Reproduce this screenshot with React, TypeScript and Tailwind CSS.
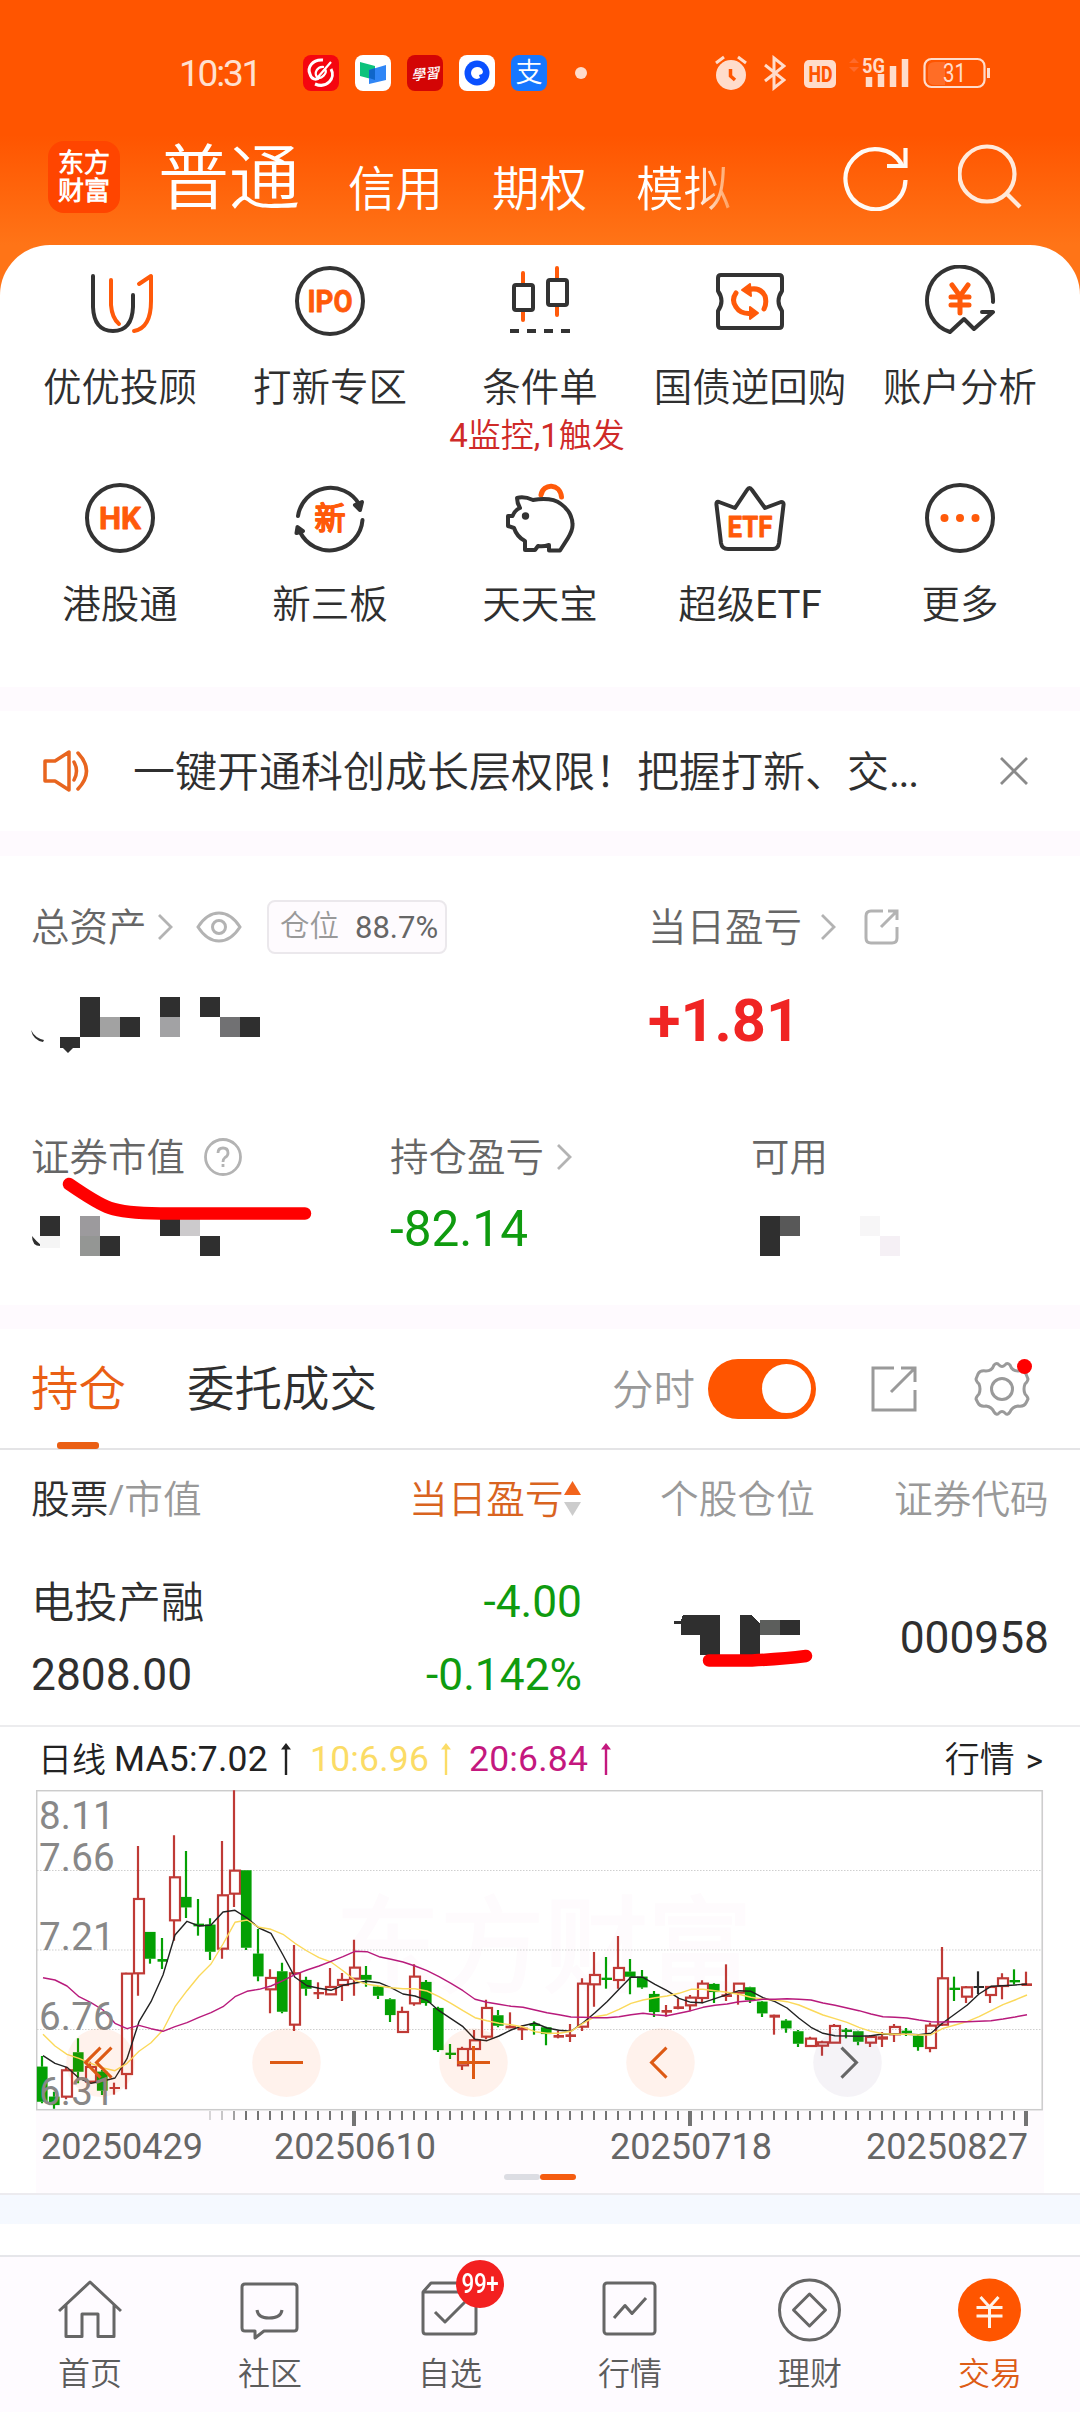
import React from "react";

type IconProps = { children: React.ReactNode };

const INK = "#333333";
const ORANGE = "#ff5a0a";

/* ---------- Status bar ---------- */

function StatusBar() {
  return (
    <div className="flex h-[36px] items-center">
      <span className="w-[124px] text-[37px] leading-none tracking-[-2.200px] text-[#ffe0cf]">10:31</span>
      <div className="flex gap-[16px]">
        <svg width="36" height="36" viewBox="0 0 36 36">
          <rect width="36" height="36" rx="8" fill="#f5060f" />
          <path d="M20 5 C9 4 4 13 7 19 C8 24 13 26 17 22 M12 29 C24 34 33 23 28 14" fill="none" stroke="#fff" strokeWidth="3" />
          <path d="M28 7 L15 22 M21 12 C14 11 11 18 14 22 C18 25 25 18 22 14" fill="none" stroke="#fff" strokeWidth="2.200" />
        </svg>
        <svg width="36" height="36" viewBox="0 0 36 36">
          <rect width="36" height="36" rx="8" fill="#fff" />
          <path d="M5 7 L20 11 V25 L5 21 Z" fill="#0cc27c" />
          <path d="M14 15 L31 10 V25 L14 29 Z" fill="#2f86f6" />
          <path d="M14 15 L20 13 V25 L14 23 Z" fill="#0f66c9" />
        </svg>
        <div className="flex h-[36px] w-[36px] items-center justify-center rounded-[8px] bg-[#d30505]">
          <span className="-rotate-6 font-['Noto_Sans_CJK_TC',sans-serif] text-[14px] leading-none font-medium text-white italic">學習</span>
        </div>
        <svg width="36" height="36" viewBox="0 0 36 36">
          <rect width="36" height="36" rx="8" fill="#fff" />
          <circle cx="18" cy="18" r="12.500" fill="#0a50ff" />
          <path d="M18 12 A6 6 0 1 0 18 24 L21 23 L20 20 L23 19 L24 17 A6 6 0 0 0 18 12 Z" fill="#fff" />
        </svg>
        <div className="flex h-[36px] w-[36px] items-center justify-center rounded-[8px] bg-[#1677ff]">
          <span className="text-[27px] leading-none font-medium text-white">支</span>
        </div>
      </div>
      <div className="ml-[28px] h-[12px] w-[12px] rounded-full bg-[#ffdccb]" />
      <div className="ml-[128px] flex items-center">
        <svg width="32" height="36" viewBox="0 0 32 36">
          <circle cx="16" cy="20" r="15" fill="#ffdccb" />
          <path d="M1 8 L9 2 M31 8 L23 2" stroke="#ffdccb" strokeWidth="3" />
          <path d="M15.500 14 V21 L20 25" fill="none" stroke="#ff5500" strokeWidth="3.500" />
        </svg>
        <svg className="ml-[17px]" width="22" height="36" viewBox="0 0 22 36">
          <path d="M1 10 L20 25 L10 33 V3 L20 11 L1 26" fill="none" stroke="#ffdccb" strokeWidth="3" />
        </svg>
        <svg className="ml-[18px]" width="32" height="36" viewBox="0 0 32 36">
          <rect y="5" width="32" height="28" rx="5" fill="#ffdccb" />
          <text x="4.500" y="27" fontSize="22" fontWeight="800" textLength="24" lengthAdjust="spacingAndGlyphs" fill="#ff5500">HD</text>
        </svg>
        <svg className="ml-[11px]" width="64" height="36" viewBox="0 0 64 36">
          <path d="M2 8 L7 3 L12 8 Z M2 12 L7 17 L12 12 Z" fill="#ff6a2a" />
          <text x="15" y="17.500" fontSize="20" fontWeight="700" textLength="23" lengthAdjust="spacingAndGlyphs" fill="#ffdccb">5G</text>
          <path d="M22 22 V32 M34 19 V32 M46 11 V32 M58 4 V32" stroke="#ffdccb" strokeWidth="6.500" strokeLinecap="butt" />
        </svg>
        <svg className="ml-[12px]" width="68" height="36" viewBox="0 0 68 36">
          <rect x="1.500" y="4" width="60" height="28" rx="7" fill="none" stroke="#ffdccb" strokeWidth="2.200" />
          <path d="M12 7 H22 V30 H12 Q5 30 5 24 V13 Q5 7 12 7" fill="#ff6d26" />
          <path d="M65.500 13 V23" stroke="#ffdccb" strokeWidth="3" />
          <text x="20" y="27" fontSize="25" textLength="23" lengthAdjust="spacingAndGlyphs" fill="#ffdccb">31</text>
        </svg>
      </div>
    </div>
  );
}

/* ---------- Header ---------- */

function Header() {
  return (
    <header className="h-[295px] bg-[linear-gradient(180deg,#ff5500_0px,#ff5500_135px,#ff7417_245px,#ff7417_295px)]">
      <div className="pt-[55px] pl-[179px]">
        <StatusBar />
      </div>
      <div className="mt-[46px] flex h-[80px] items-start pl-[48px] text-white">
        <div className="mt-[4px] flex h-[72px] w-[72px] flex-col items-center justify-center rounded-[16px] bg-[#ff4500] text-[26px] leading-[28px] font-bold">
          <span>东方</span>
          <span>财富</span>
        </div>
        <span className="mt-[2px] ml-[38px] w-[190px] text-[71px] leading-[80px]">普通</span>
        <span className="mt-[13px] w-[144px] text-[47.500px] leading-[80px]">信用</span>
        <span className="mt-[13px] w-[144px] text-[47.500px] leading-[80px]">期权</span>
        <span className="mt-[13px] w-[98px] bg-[linear-gradient(90deg,#ffffff_60%,#ff9a55_98%)] bg-clip-text text-[47.500px] leading-[80px] text-transparent">
          模拟
        </span>
        <svg className="mt-[6px] ml-[108px]" width="68" height="68" viewBox="0 0 68 68" fill="none" stroke="#fffaf5" strokeWidth="4.200">
          <path d="M63.500 37 A30 30 0 1 1 60 22" />
          <path d="M63.500 5 V23 H45" />
        </svg>
        <svg className="mt-[7px] ml-[48px]" width="66" height="66" viewBox="0 0 66 66" fill="none" stroke="#ffeadb" strokeWidth="4.200">
          <circle cx="29" cy="30" r="27.500" />
          <path d="M48 49 L62 63" />
        </svg>
      </div>
    </header>
  );
}

/* ---------- Service grid ---------- */

function ServiceIcon({ children }: IconProps) {
  return (
    <svg width="72" height="72" viewBox="0 0 72 72" fill="none" stroke={INK} strokeWidth="4" strokeLinecap="round" strokeLinejoin="round">
      {children}
    </svg>
  );
}

function IconLabel({ y, size, width, children }: { y: number; size: number; width: number; children: string }) {
  return (
    <text
      x="36"
      y={y}
      textAnchor="middle"
      fontSize={size}
      fontWeight="700"
      textLength={width}
      lengthAdjust="spacingAndGlyphs"
      fill={ORANGE}
      stroke={ORANGE}
      strokeWidth="0.800"
    >
      {children}
    </text>
  );
}

const services: { label: string; note?: string; icon: React.ReactNode }[] = [
  {
    label: "优优投顾",
    icon: (
      <ServiceIcon>
        <path d="M9 11 V42 Q10 66 29 66 Q48 66 49 42 V30" />
        <path d="M27 15 V40 Q28 53 35 59 M55 19 L67 11 V36 Q67 63 50 66" stroke={ORANGE} />
      </ServiceIcon>
    ),
  },
  {
    label: "打新专区",
    icon: (
      <ServiceIcon>
        <circle cx="36" cy="36" r="33" />
        <IconLabel y={47} size={31} width={45}>IPO</IconLabel>
      </ServiceIcon>
    ),
  },
  {
    label: "条件单",
    note: "4监控,1触发",
    icon: (
      <ServiceIcon>
        <path d="M19 8 V19 M19 45 V55 M53 3 V14 M53 40 V50" stroke={ORANGE} />
        <rect x="10" y="20" width="19" height="25" rx="2" />
        <rect x="44" y="15" width="19" height="25" rx="2" />
        <path d="M6 66 H15 M23 66 H32 M40 66 H49 M57 66 H66" strokeLinecap="butt" />
      </ServiceIcon>
    ),
  },
  {
    label: "国债逆回购",
    icon: (
      <ServiceIcon>
        <path d="M7 10 H65 Q68 10 68 13 V26 Q61 36 68 46 V60 Q68 63 65 63 H7 Q4 63 4 60 V46 Q11 36 4 26 V13 Q4 10 7 10 Z" />
        <path d="M33 25 Q46 21 51 31 Q53 38 50 44 M22 28 Q17 35 22 42 Q27 50 39 48" stroke={ORANGE} strokeWidth="5" />
        <path d="M36 19 L28 25 L37 31 Z M36 42 L44 48 L36 54 Z" fill={ORANGE} stroke={ORANGE} strokeWidth="2" />
      </ServiceIcon>
    ),
  },
  {
    label: "账户分析",
    icon: (
      <ServiceIcon>
        <path d="M69 37 A33 33.500 0 1 0 26 67 L40 54 L50 64 L69 47 H58" />
        <path d="M28 20 L36 31 L44 20 M27 32 H45 M27 40 H45 M36 31 V48" stroke={ORANGE} strokeWidth="5" />
      </ServiceIcon>
    ),
  },
  {
    label: "港股通",
    icon: (
      <ServiceIcon>
        <circle cx="36" cy="36" r="33" />
        <IconLabel y={47} size={31} width={42}>HK</IconLabel>
      </ServiceIcon>
    ),
  },
  {
    label: "新三板",
    icon: (
      <ServiceIcon>
        <path d="M4 34 A33 33 0 0 1 65 22 M68.500 38 A33 33 0 0 1 6 50" />
        <path d="M66 28 L61 23 L68 20 Z M3.500 45 L2.500 51 L9 49 Z" fill={INK} />
        <IconLabel y={47} size={31} width={31}>新</IconLabel>
      </ServiceIcon>
    ),
  },
  {
    label: "天天宝",
    icon: (
      <ServiceIcon>
        <path d="M37 13 C39 1 56 1 57.500 15" stroke={ORANGE} strokeWidth="5" />
        <path d="M4 34 H8.500 Q11 28 16 26 Q13 21 13 16 Q20 14 29 18 Q48 15 57 22 Q68 30 68.500 42 Q69 48 64 56 L56 68.500 H45 V63 Q39 65 34 64 L31 68 H21 V59 Q13 55 10 46 L4 44 Z" />
        <circle cx="21.500" cy="34" r="3.700" fill={INK} stroke="none" />
      </ServiceIcon>
    ),
  },
  {
    label: "超级ETF",
    icon: (
      <ServiceIcon>
        <path d="M5 20 L21 26 L33 8 Q35.500 4 38 8 L51 26 L67 20 Q70 20 69.500 23 L65 61 Q64 67 59 67 H14 Q8 67 7 61 L2.500 23 Q2 19 5 20 Z" />
        <IconLabel y={55} size={30} width={45}>ETF</IconLabel>
      </ServiceIcon>
    ),
  },
  {
    label: "更多",
    icon: (
      <ServiceIcon>
        <circle cx="36" cy="36" r="33" />
        <g fill={ORANGE} stroke="none">
          <circle cx="20.500" cy="36" r="4" />
          <circle cx="36" cy="36" r="4" />
          <circle cx="51.500" cy="36" r="4" />
        </g>
      </ServiceIcon>
    ),
  },
];

function Services() {
  return (
    <section className="-mt-[50px] grid h-[442px] grid-cols-5 content-start rounded-t-[50px] bg-white px-[15px] pt-[20px]">
      {services.map((s) => (
        <div key={s.label} className="flex h-[217px] flex-col items-center">
          {s.icon}
          <span className="mt-[26px] text-[38.500px] leading-[50px] whitespace-nowrap text-[#2f2f2f]">{s.label}</span>
          {s.note && <span className="mr-[6px] text-[33px] leading-[46px] whitespace-nowrap text-[#cf2a28]">{s.note}</span>}
        </div>
      ))}
    </section>
  );
}

/* ---------- Notice ---------- */

function Notice() {
  return (
    <section className="flex h-[120px] items-center bg-white pl-[42px]">
      <svg width="50" height="44" viewBox="0 0 50 44" fill="none" stroke="#e8651f" strokeWidth="3.500" strokeLinejoin="round">
        <path d="M3 12 H13 L27 3 V41 L13 32 H3 Z" />
        <path d="M32 13 Q37 22 32 31 M36 4 Q53 22 36 40" strokeLinecap="round" />
      </svg>
      <span className="mt-[3px] ml-[41px] w-[867px] text-[42px] leading-none whitespace-nowrap text-[#2f2f2f]">
        一键开通科创成长层权限！把握打新、交<span className="tracking-[-1.500px]">...</span>
      </span>
      <svg width="28" height="28" viewBox="0 0 28 28" stroke="#8a8a8a" strokeWidth="2.800">
        <path d="M1 1 L27 27 M27 1 L1 27" />
      </svg>
    </section>
  );
}

/* ---------- Assets ---------- */

function Chevron({ className }: { className?: string }) {
  return (
    <svg className={className} width="16" height="28" viewBox="0 0 16 28" fill="none" stroke="#b3b3b3" strokeWidth="2.800">
      <path d="M2 2 L14 14 L2 26" />
    </svg>
  );
}

type Block = [x: number, y: number, w: number, h: number, color: string];

function Mosaic({ className, width, height, blocks, mark }: { className?: string; width: number; height: number; blocks: Block[]; mark?: string }) {
  return (
    <svg className={className} width={width} height={height} viewBox={`0 0 ${width} ${height}`} overflow="visible" shapeRendering="crispEdges">
      {mark && <path d={mark} fill="#2f2f2f" shapeRendering="geometricPrecision" />}
      {blocks.map(([x, y, w, h, c], i) => (
        <rect key={i} x={x} y={y} width={w} height={h} fill={c} />
      ))}
    </svg>
  );
}

const D = "#2f2f2f";

function Assets() {
  return (
    <section className="relative h-[449px] bg-white pt-[44px] text-[38.500px] leading-none text-[#666666]">
      <div className="flex h-[54px] items-center pl-[31px]">
        <span className="mt-[3px] w-[126px]">总资产</span>
        <Chevron />
        <svg className="ml-[23px]" width="46" height="34" viewBox="0 0 46 34" fill="none" stroke="#b3b3b3" strokeWidth="3">
          <path d="M2 17 Q11 3 23 3 Q35 3 44 17 Q35 31 23 31 Q11 31 2 17 Z" />
          <circle cx="23" cy="17" r="6.500" />
        </svg>
        <div className="ml-[25px] flex h-[54px] w-[180px] items-center rounded-[8px] border-2 border-[#ebe8ec] bg-[#fefbfe] pl-[11px]">
          <span className="text-[29.500px] text-[#999999]">仓位</span>
          <span className="ml-[16px] text-[31px] text-[#666666]">88.7%</span>
        </div>
        <span className="mt-[3px] ml-[201px] w-[172px]">当日盈亏</span>
        <Chevron />
        <svg className="ml-[28px]" width="36" height="36" viewBox="0 0 36 36" fill="none" stroke="#b3b3b3" strokeWidth="3">
          <path d="M19 2 H7 Q2 2 2 7 V29 Q2 34 7 34 H28 Q33 34 33 29 V18 M24 2 H33 V11 M33 2 L17 18" />
        </svg>
      </div>
      <div className="mt-[43px] flex h-[60px] items-start pl-[20px]">
        <Mosaic
          width={240}
          height={60}
          mark="M11 33 Q15 41 24 43 L23 45 Q13 43 11 33 Z M42 50 L48 56 L56 48 Z"
          blocks={[
            [60, 0, 20, 40, D], [80, 20, 20, 20, "#a2a2a2"], [100, 20, 20, 20, D],
            [140, 0, 20, 20, D], [140, 20, 20, 20, "#a2a2a4"], [180, 0, 20, 20, D],
            [200, 20, 20, 20, "#717173"], [220, 20, 20, 20, D], [40, 40, 20, 11, D],
          ]}
        />
        <span className="-mt-[5px] ml-[388px] text-[59.500px] font-bold text-[#f02524]">+1.81</span>
      </div>
      <div className="mt-[70px] flex h-[60px] items-center pl-[31px]">
        <span className="mt-[2px] w-[173px]">证券市值</span>
        <svg width="38" height="38" viewBox="0 0 38 38" fill="none" stroke="#b3b3b3" strokeWidth="2.800">
          <circle cx="19" cy="19" r="17.500" />
          <path d="M14 15 Q14 10 19 10 Q24 10 24 15 Q24 18 21 19.500 Q19 21 19 24 M19 26 V29" />
        </svg>
        <span className="mt-[2px] ml-[148px] w-[166px]">持仓盈亏</span>
        <Chevron />
        <span className="mt-[2px] ml-[179px]">可用</span>
      </div>
      <div className="mt-[22px] flex items-start pl-[20px]">
        <Mosaic
          className="mt-[7px]"
          width={220}
          height={40}
          mark="M12 20 Q16 25 22 30 Q12 31 12 20 Z"
          blocks={[
            [20, 0, 20, 20, D], [20, 20, 20, 12, "#f5f5f5"], [60, 0, 20, 20, "#9c9a9d"], [60, 20, 20, 20, "#949694"],
            [80, 20, 20, 20, D], [140, 0, 20, 20, D], [160, 0, 20, 20, "#cccacc"], [180, 20, 20, 20, D],
          ]}
        />
        <span className="-mt-[4px] ml-[150px] w-[370px] text-[49.500px] text-[#0f9b0f]">-82.14</span>
        <Mosaic
          className="mt-[7px]"
          width={160}
          height={40}
          blocks={[[0, 0, 20, 40, D], [20, 0, 20, 20, "#585858"], [100, 0, 20, 20, "#f7f6f7"], [120, 20, 20, 20, "#f5f0f5"]]}
        />
      </div>
      <svg className="absolute top-[320px] left-[56px]" width="264" height="48" viewBox="0 0 264 48" fill="none" stroke="#ff0000" strokeWidth="12.500" strokeLinecap="round" strokeLinejoin="round">
        <path d="M13 8 Q42 28 54 32 Q68 37 104 37.500 H249" />
      </svg>
    </section>
  );
}

/* ---------- Holdings ---------- */

function HoldingsTabs() {
  return (
    <div className="flex h-[121px] items-center border-b-2 border-[#e4e4e6] pl-[31px] text-[47.500px] leading-none">
      <div className="relative flex h-full w-[156px] items-center text-[#ea5f14]">
        <span className="mt-[5px]">持仓</span>
        <div className="absolute bottom-[-1px] left-[26px] h-[7px] w-[42px] rounded-[3px] bg-[#ea5f14]" />
      </div>
      <span className="mt-[5px] w-[425px] text-[#2f2f2f]">委托成交</span>
      <span className="mt-[4px] w-[96px] text-[41.500px] text-[#999999]">分时</span>
      <div className="flex h-[60px] w-[108px] items-center justify-end rounded-full bg-[#ff5500] pr-[5px]">
        <div className="h-[49px] w-[49px] rounded-full bg-white" />
      </div>
      <svg className="ml-[55px]" width="46" height="46" viewBox="0 0 46 46" fill="none" stroke="#9a9a9a" strokeWidth="3">
        <path d="M23 2 H2 V44 H44 V24 M30 2 H44 V16 M44 2 L20 26" />
      </svg>
      <div className="relative ml-[55px] h-[58px] w-[60px]">
        <svg width="60" height="58" viewBox="0 0 60 58" fill="none" stroke="#9a9a9a" strokeWidth="3" strokeLinejoin="round">
          <path d="M22 5 Q25 2 27 5 Q30 8 33 5 Q35 2 38 5 Q40 11 46 11 Q52 10 54 14 L56 19 Q56 21 53 24 Q51 29 53 34 Q56 37 56 39 L54 43 Q52 47 46 46 Q40 47 38 52 Q35 56 33 53 Q30 50 27 53 Q25 56 22 52 Q20 47 14 46 Q8 47 6 43 L4 39 Q4 37 7 34 Q9 29 7 24 Q4 21 4 19 L6 14 Q8 10 14 11 Q20 11 22 5 Z" />
          <circle cx="30" cy="29" r="10.500" />
        </svg>
        <div className="absolute top-[-1px] right-0 h-[15px] w-[15px] rounded-full bg-[#ff0000]" />
      </div>
    </div>
  );
}

function HoldingsTable() {
  return (
    <div className="border-b-2 border-[#ececee] leading-none">
      <div className="flex h-[98px] items-center pl-[31px] text-[38.700px] whitespace-nowrap text-[#999999]">
        <span className="mt-[2px] w-[378px]">
          <span className="text-[#2f2f2f]">股票</span>/市值
        </span>
        <span className="mt-[2px] w-[155px] text-[#d9641f]">当日盈亏</span>
        <svg className="w-[17px]" width="17" height="36" viewBox="0 0 17 36">
          <path d="M8.500 0 L17 14 H0 Z" fill="#f2641c" />
          <path d="M8.500 35 L17 21 H0 Z" fill="#cccccc" />
        </svg>
        <span className="mt-[2px] ml-[79px] w-[234px]">个股仓位</span>
        <span className="mt-[2px]">证券代码</span>
      </div>
      <div className="flex h-[177px] pr-[31px] pl-[31px] text-[44.300px] text-[#2f2f2f]">
        <div className="flex w-[250px] flex-col pt-[32px]">
          <span className="text-[43.300px] leading-[48px]">电投产融</span>
          <span className="mt-[22px] leading-[50px]">2808.00</span>
        </div>
        <div className="flex w-[301px] flex-col items-end pt-[30px] text-[#0f9b0f]">
          <span className="leading-[48px]">-4.00</span>
          <span className="mt-[24px] leading-[50px]">-0.142%</span>
        </div>
        <svg className="mt-[66px] ml-[90px]" width="144" height="60" viewBox="0 0 144 60" shapeRendering="crispEdges">
          <path d="M2 7 H9 L11 1 H28 H48 V41 H28 V21 H9 V10 H2 Z M68 1 H80 L88 10 V41 H68 Z" fill={D} />
          <rect x="88" y="6" width="20" height="15" fill="#5c5e5c" />
          <rect x="108" y="6" width="20" height="15" fill={D} />
          <path d="M37 46.500 H80 Q110 45 134 42" fill="none" stroke="#ff0000" strokeWidth="12.500" strokeLinecap="round" shapeRendering="geometricPrecision" />
        </svg>
        <span className="mt-[66px] ml-auto leading-[48px]">000958</span>
      </div>
    </div>
  );
}

/* ---------- Candlestick chart ---------- */

// kind: g falling, r rising, k unchanged; then high, body top, body bottom, low
type Candle = [kind: "g" | "r" | "k", high: number, top: number, bottom: number, low: number];

const candles: Candle[] = [
  ["g", 1008, 1040, 1145, 1150], ["g", 1115, 1130, 1155, 1166], ["r", 1040, 1050, 1130, 1138], ["g", 955, 997, 1055, 1090],
  ["r", 1025, 1040, 1085, 1090], ["g", 1050, 1055, 1112, 1125], ["r", 1088, 1104, 1104, 1124], ["r", 758, 760, 1062, 1108],
  ["r", 378, 536, 760, 827], ["g", 636, 636, 716, 731], ["g", 654, 718, 724, 747], ["r", 346, 471, 601, 662],
  ["g", 393, 531, 562, 594], ["g", 537, 612, 618, 647], ["g", 595, 614, 695, 720], ["r", 363, 525, 686, 716],
  ["r", 211, 451, 521, 561], ["g", 451, 451, 683, 690], ["g", 627, 701, 769, 784], ["r", 748, 773, 808, 880],
  ["g", 728, 754, 875, 880], ["r", 675, 759, 914, 933], ["g", 770, 780, 806, 827], ["r", 787, 817, 822, 837],
  ["r", 744, 800, 823, 823], ["r", 759, 779, 795, 843], ["r", 659, 742, 776, 827], ["g", 738, 765, 779, 800],
  ["g", 798, 800, 827, 837], ["g", 835, 838, 885, 906], ["r", 860, 875, 936, 936], ["r", 733, 769, 850, 857],
  ["g", 780, 786, 849, 857], ["g", 860, 864, 990, 996], ["g", 972, 999, 1004, 1017], ["r", 980, 986, 1036, 1050],
  ["r", 930, 960, 987, 990], ["r", 839, 863, 950, 958], ["g", 870, 886, 917, 922], ["r", 877, 918, 924, 924],
  ["r", 916, 924, 930, 960], ["g", 904, 912, 917, 944], ["g", 920, 922, 942, 976], ["r", 932, 946, 952, 955],
  ["r", 912, 944, 950, 966], ["r", 775, 790, 920, 933], ["r", 696, 764, 793, 860], ["g", 711, 774, 779, 806],
  ["r", 648, 743, 780, 806], ["g", 717, 755, 770, 823], ["g", 750, 770, 802, 806], ["g", 813, 822, 876, 891],
  ["r", 855, 871, 877, 890], ["r", 835, 860, 866, 868], ["r", 825, 832, 856, 872], ["r", 781, 790, 834, 850],
  ["g", 790, 792, 816, 849], ["r", 733, 824, 830, 843], ["r", 790, 790, 818, 854], ["g", 800, 802, 840, 849],
  ["g", 843, 845, 880, 891], ["r", 884, 885, 892, 944], ["g", 898, 902, 925, 938], ["g", 930, 934, 971, 981],
  ["r", 950, 955, 978, 980], ["r", 962, 966, 977, 1007], ["r", 912, 917, 968, 968], ["g", 924, 930, 935, 955],
  ["g", 932, 934, 965, 976], ["r", 945, 950, 968, 981], ["r", 936, 950, 958, 981], ["r", 912, 920, 943, 966],
  ["g", 924, 933, 938, 948], ["g", 942, 948, 981, 992], ["r", 908, 916, 984, 997], ["r", 681, 774, 914, 918],
  ["g", 770, 804, 809, 843], ["r", 798, 801, 830, 849], ["k", 754, 801, 801, 822], ["r", 798, 800, 825, 849],
  ["r", 760, 774, 798, 838], ["g", 748, 781, 786, 794], ["r", 755, 791, 797, 798],
];

const ma5 = [
  1007, 1030, 1042, 1075, 1090, 1083, 1074, 1016, 905, 845, 765, 645, 604, 618, 615, 576, 571, 594, 624, 640, 705, 772, 797, 805, 811,
  796, 789, 784, 788, 803, 822, 828, 841, 872, 896, 920, 958, 962, 948, 930, 917, 909, 924, 931, 934, 908, 878, 845, 808, 771, 772, 793,
  812, 835, 847, 848, 836, 824, 812, 814, 833, 845, 864, 895, 922, 940, 947, 948, 949, 947, 942, 943, 943, 944, 940, 908, 882, 856, 822,
  799, 797, 795, 792,
];
const ma10 = [
  943, 978, 1003, 1015, 1030, 1044, 1052, 1030, 994, 968, 930, 860, 812, 768, 732, 672, 607, 600, 622, 628, 643, 670, 693, 713, 726, 752,
  781, 793, 798, 803, 806, 806, 813, 830, 850, 872, 893, 902, 910, 914, 921, 935, 940, 940, 934, 910, 890, 884, 868, 850, 840, 833, 828,
  820, 808, 808, 812, 817, 823, 832, 838, 840, 845, 855, 870, 885, 896, 907, 922, 934, 941, 943, 943, 945, 944, 925, 915, 905, 890, 872,
  854, 840, 825,
];
const ma20 = [
  773, 780, 798, 830, 848, 870, 910, 926, 916, 926, 934, 920, 908, 892, 878, 860, 830, 814, 808, 798, 782, 764, 750, 738, 724, 710, 694,
  695, 710, 718, 726, 738, 752, 770, 790, 812, 838, 847, 853, 859, 862, 870, 878, 884, 891, 892, 893, 893, 890, 884, 880, 884, 887, 880,
  872, 862, 856, 852, 845, 842, 838, 838, 836, 838, 840, 849, 856, 864, 872, 882, 890, 892, 894, 900, 905, 906, 905, 905, 904, 902, 897,
  891, 884,
];

const px = (i: number) => 6 + i * 12;
const py = (v: number) => v / 3 - 70;
const line = (vals: number[]) => vals.map((v, i) => `${px(i) + 1},${py(v).toFixed(1)}`).join(" ");
const candleColor = { g: "#04a004", r: "#bf3a36", k: "#2b2b2b" };

function CandleShape({ c, i }: { c: Candle; i: number }) {
  const [kind, high, top, bottom, low] = c;
  const x = px(i);
  const color = candleColor[kind];
  const flat = bottom - top < 10;
  return (
    <g stroke={color} strokeWidth="2.200" fill="none">
      {flat ? (
        <>
          <path d={`M${x} ${py(high)} V${py(low)}`} />
          <path d={`M${x - 4.5} ${py((top + bottom) / 2)} H${x + 6}`} strokeWidth={Math.max(2, (bottom - top) / 3 + 0.7)} />
        </>
      ) : (
        <>
          <path d={`M${x} ${py(high)} V${py(top)} M${x} ${py(bottom)} V${py(low)}`} />
          <rect
            x={x - 4}
            y={py(top) + (kind === "g" ? 1 : 0.3)}
            width={kind === "g" ? 8.5 : 10}
            height={(bottom - top) / 3 - (kind === "g" ? 2 : 0.3)}
            fill={kind === "g" ? color : "none"}
          />
        </>
      )}
    </g>
  );
}

function RoundButton({ x, muted, d }: { x: number; muted?: boolean; d: string }) {
  return (
    <g transform={`translate(${x} 272.600)`}>
      <circle r="34.300" fill={muted ? "#776090" : "#ff5500"} fillOpacity={0.075} />
      <path d={d} fill="none" stroke={muted ? "#666666" : "#dd5a14"} strokeWidth="3" />
    </g>
  );
}

function UpArrow({ className }: { className?: string }) {
  return (
    <svg className={className} width="12" height="32" viewBox="0 0 12 32">
      <path d="M6 0 L11 6.500 H7.200 V32 H4.800 V6.500 H1 Z" fill="currentColor" />
    </svg>
  );
}

const dates: [string, string][] = [
  ["20250429", "w-[233px]"],
  ["20250610", "w-[336px]"],
  ["20250718", "w-[256px]"],
  ["20250827", ""],
];

function ChartPanel() {
  return (
    <div className="border-b-2 border-[#ecebef]">
      <div className="flex h-[63px] items-center pr-[37px] pl-[38px] text-[35.500px] leading-none text-[#222222]">
        <span className="mt-[3px] text-[34px]">日线</span>
        <span className="mt-[2px] ml-[8px] w-[166px] tracking-[0.200px]">MA5:7.02</span>
        <UpArrow />
        <span className="mt-[2px] ml-[18px] w-[130px] tracking-[0.200px] text-[#fbdc66]">10:6.96</span>
        <UpArrow className="text-[#fbdc66]" />
        <span className="mt-[2px] ml-[17px] w-[131px] tracking-[0.200px] text-[#c4187e]">20:6.84</span>
        <UpArrow className="text-[#c4187e]" />
        <span className="mt-[3px] ml-auto text-[35px]">行情</span>
        <span className="mt-[3px] ml-[11px] text-[33px]">&gt;</span>
      </div>
      <div className="mx-[36px] h-[403px] bg-[#fefbfe]">
        <svg className="block" width="1007" height="340" viewBox="0 0 1007 340">
          <rect x="0.700" y="0.700" width="1005.500" height="319" fill="#ffffff" stroke="#cccccc" strokeWidth="1.500" />
          <text x="300" y="194" fontSize="104" fontWeight="900" fill="#fefbfd">东方财富</text>
          <path d="M1 80.500 H1005 M1 160 H1005 M1 239.500 H1005" stroke="#cfcfcf" strokeDasharray="1.500 1.500" />
          {candles.map((c, i) => (
            <CandleShape key={i} c={c} i={i} />
          ))}
          <g fill="none" strokeWidth="1.400" strokeLinejoin="round">
            <polyline points={line(ma5)} stroke="#222222" />
            <polyline points={line(ma10)} stroke="#fbd95a" />
            <polyline points={line(ma20)} stroke="#b81b7c" />
          </g>
          <g fontSize="38.500" fill="#888888" letterSpacing="0.200">
            <text x="3" y="39">8.11</text>
            <text x="3" y="81">7.66</text>
            <text x="3" y="160">7.21</text>
            <text x="3" y="240">6.76</text>
            <text x="3" y="315">6.31</text>
          </g>
          <RoundButton x={64.500} d="M0 -15 L-15 0 L0 15 M11 -15 L-4 0 L11 15" />
          <RoundButton x={250.500} d="M-16.500 0 H16.500" />
          <RoundButton x={437.500} d="M-16.500 0 H16.500 M0 -16.500 V16.500" />
          <RoundButton x={624.500} d="M6 -15 L-9 0 L6 15" />
          <RoundButton x={811.500} muted d="M-6 -15 L9 0 L-6 15" />
          <g stroke="#666666">
            {candles.map((_, i) =>
              i < 14 ? null : (
                <path
                  key={i}
                  d={`M${px(i)} 321 V${i % 28 === 26 || i === 82 ? 336 : 330}`}
                  strokeWidth={i % 28 === 26 || i === 82 ? 4 : 2}
                  opacity={i < 15 ? 0.25 : i < 16 ? 0.35 : i < 17 ? 0.6 : 0.9}
                />
              ),
            )}
          </g>
        </svg>
        <div className="flex pl-[5px] text-[36px] leading-[34px] text-[#666666]">
          {dates.map(([d, w]) => (
            <span key={d} className={w}>{d}</span>
          ))}
        </div>
        <div className="mt-[10px] flex justify-center">
          <div className="h-[6px] w-[36px] rounded-full bg-[#dcdde3]" />
          <div className="h-[6px] w-[36px] rounded-full bg-[#f55c10]" />
        </div>
      </div>
    </div>
  );
}

/* ---------- Bottom navigation ---------- */

function NavIcon({ children }: IconProps) {
  return (
    <svg width="64" height="64" viewBox="0 0 64 64" fill="none" stroke="#666666" strokeWidth="3" strokeLinejoin="round">
      {children}
    </svg>
  );
}

const navItems: { label: string; badge?: string; active?: boolean; icon: React.ReactNode }[] = [
  {
    label: "首页",
    icon: (
      <NavIcon>
        <path d="M1 33 L32 4 L63 33 M8 27 V58.500 H24 V36 H40 V58.500 H56 V27" />
      </NavIcon>
    ),
  },
  {
    label: "社区",
    icon: (
      <NavIcon>
        <path d="M7 6 H56 Q59 6 59 9 V50 Q59 53 56 53 H26 L17 60 V53 H7 Q4 53 4 50 V9 Q4 6 7 6 Z M19 32 Q20 40 31 40 Q43 40 44 32" />
      </NavIcon>
    ),
  },
  {
    label: "自选",
    badge: "99+",
    icon: (
      <NavIcon>
        <path d="M5 14 H58 V53 Q58 56 55 56 H8 Q5 56 5 53 Z M5 14 L13 5 H50 L58 14 M17 34 L27 44 L47 24" />
      </NavIcon>
    ),
  },
  {
    label: "行情",
    icon: (
      <NavIcon>
        <rect x="6" y="5" width="51" height="51" rx="3" />
        <path d="M16 40 L27 27.500 L34 35.500 L48 20" />
      </NavIcon>
    ),
  },
  {
    label: "理财",
    icon: (
      <NavIcon>
        <circle cx="31.500" cy="32" r="30" />
        <path d="M31.500 16 L47.500 32 L31.500 48 L15.500 32 Z" />
      </NavIcon>
    ),
  },
  {
    label: "交易",
    active: true,
    icon: (
      <NavIcon>
        <circle cx="31.500" cy="32" r="31.500" fill="#ff5500" stroke="none" />
        <path d="M22.500 19 L31.500 29 L40.500 19 M18.500 29.500 H44.500 M18.500 38 H44.500 M31.500 29 V50" stroke="#fff3ea" />
      </NavIcon>
    ),
  },
];

function BottomNav() {
  return (
    <nav className="grid h-[157px] grid-cols-6 border-t-2 border-[#e6e6ea] bg-[#fefbff]">
      {navItems.map((n) => (
        <div key={n.label} className="relative flex flex-col items-center pt-[21px]">
          {n.icon}
          <span className={n.active ? "mt-[12px] text-[32px] leading-[40px] text-[#dd5c16]" : "mt-[12px] text-[32px] leading-[40px] text-[#5c5c5c]"}>
            {n.label}
          </span>
          {n.badge && (
            <div className="absolute top-[3px] left-[96px] flex h-[48px] w-[48px] items-center justify-center rounded-full bg-[#f32020]">
              <span className="scale-x-[0.800] text-[28px] leading-none font-medium tracking-[-0.500px] text-white">{n.badge}</span>
            </div>
          )}
        </div>
      ))}
    </nav>
  );
}

export default function App() {
  return (
    <main className="flex h-[2412px] w-[1080px] flex-col overflow-hidden bg-[#fefafe] font-[Roboto,'Noto_Sans_CJK_SC_DemiLight','Noto_Sans_CJK_SC',sans-serif]">
      <Header />
      <Services />
      <div className="h-[24px]" />
      <Notice />
      <div className="h-[25px]" />
      <Assets />
      <div className="h-[24px]" />
      <section className="bg-white">
        <HoldingsTabs />
        <HoldingsTable />
        <ChartPanel />
      </section>
      <div className="h-[29px] bg-[#f5f9ff]" />
      <div className="flex-1 bg-white" />
      <BottomNav />
    </main>
  );
}
